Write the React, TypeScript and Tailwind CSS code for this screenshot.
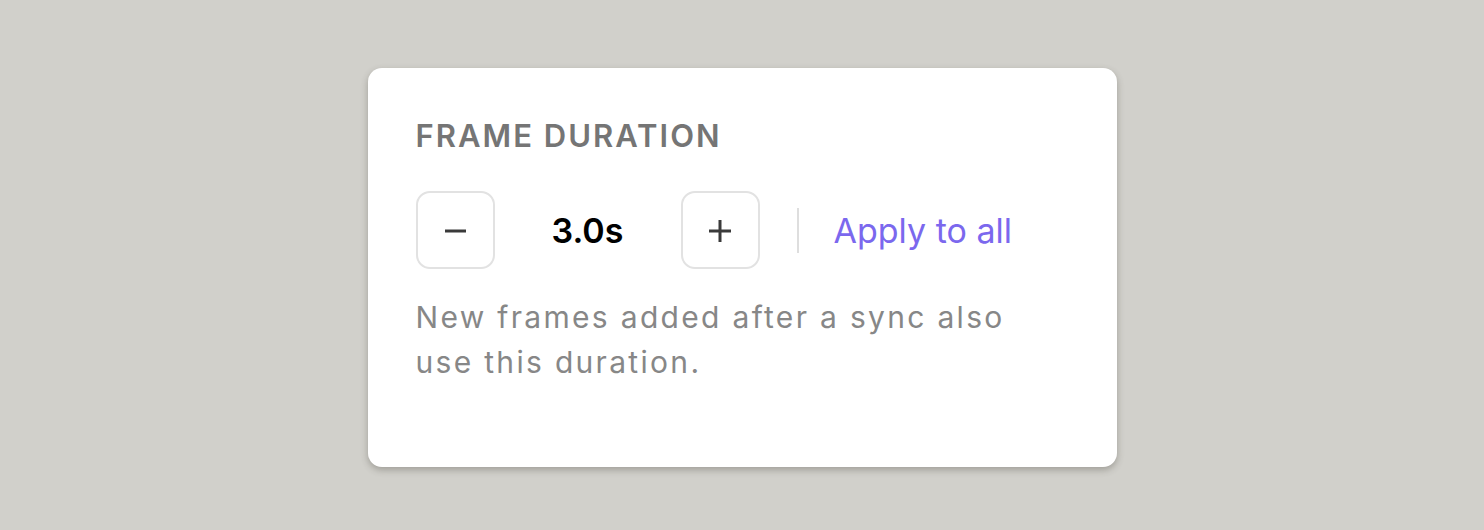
import React, { useState } from 'react';

function FrameDurationCard() {
  const [seconds, setSeconds] = useState(3);

  return (
    <div className="w-[749px] rounded-[14px] bg-white pt-[50px] pb-[82px] px-[48px] shadow-[0_3px_7px_rgba(60,58,50,0.33)]">
      <h3 className="text-[31px] leading-[36px] font-semibold tracking-[0.065em] text-[#757575]">
        FRAME DURATION
      </h3>

      <div className="mt-[37px] flex items-center">
        <button
          onClick={() => setSeconds((s) => Math.max(0.5, s - 0.5))}
          className="w-[79px] h-[78px] rounded-[14px] border-2 border-[#e2e2e2] flex items-center justify-center"
        >
          <svg width="21" height="4" viewBox="0 0 21 4" className="mt-[2px]">
            <rect x="0" y="0.5" width="21" height="3" fill="#3a3a3a" />
          </svg>
        </button>
        <div className="w-[186px] text-center text-[34px] font-semibold text-black">
          {seconds.toFixed(1)}s
        </div>
        <button
          onClick={() => setSeconds((s) => s + 0.5)}
          className="w-[79px] h-[78px] rounded-[14px] border-2 border-[#e2e2e2] flex items-center justify-center"
        >
          <svg width="22" height="22" viewBox="0 0 22 22" className="mt-[2px]">
            <rect x="0" y="9.5" width="22" height="3" fill="#3a3a3a" />
            <rect x="9.5" y="0" width="3" height="22" fill="#3a3a3a" />
          </svg>
        </button>
        <div className="ml-[37px] w-[2px] h-[45px] bg-[#dedede]" />
        <button className="ml-[35px] text-[34px] text-[#7b68ee]">Apply to all</button>
      </div>

      <p className="mt-[26px] w-[600px] text-[30px] leading-[45px] tracking-[0.077em] text-[#878787]">
        New frames added after a sync also use this duration.
      </p>
    </div>
  );
}

export default function App() {
  return (
    <div
      className="h-[530px] w-full bg-[#d1d0cb] flex items-start justify-center pt-[68px]"
      style={{ fontFamily: 'Inter, "Noto Sans", sans-serif' }}
    >
      <FrameDurationCard />
    </div>
  );
}
